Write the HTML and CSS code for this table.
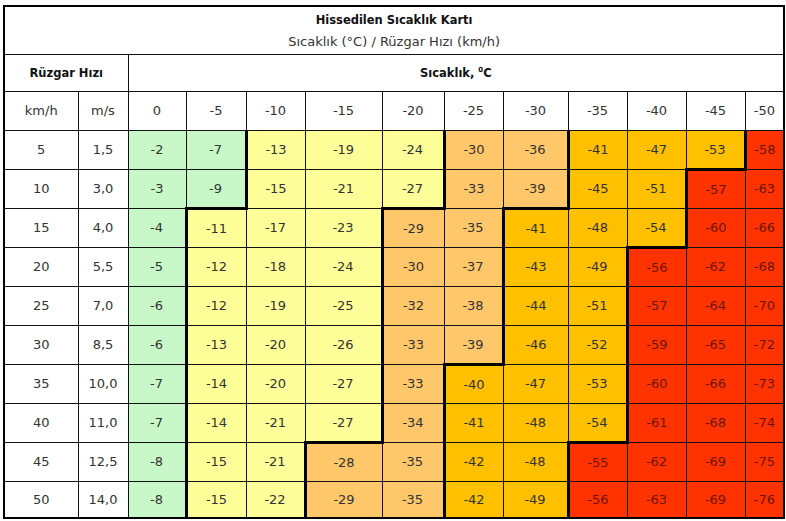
FILE: index.html
```html
<!DOCTYPE html>
<html lang="tr">
<head>
<meta charset="utf-8">
<title>Hissedilen Sıcaklık Kartı</title>
<link rel="stylesheet" href="styles.css">
</head>
<body>
<table class="chart">
  <colgroup>
    <col class="w-kmh"><col class="w-ms"><col class="w-0"><col class="w-5"><col class="w-10"><col class="w-15"><col class="w-20"><col class="w-25"><col class="w-30"><col class="w-35"><col class="w-40"><col class="w-45"><col class="w-50">
  </colgroup>
  <thead>
    <tr class="r-title">
      <th colspan="13" class="title-cell">
        <div class="title">Hissedilen Sıcaklık Kartı</div>
        <div class="subtitle">Sıcaklık (°C) / Rüzgar Hızı (km/h)</div>
      </th>
    </tr>
    <tr class="r-group">
      <th colspan="2" class="grp">Rüzgar Hızı</th>
      <th colspan="11" class="grp">Sıcaklık, <sup>0</sup>C</th>
    </tr>
    <tr class="r-head">
      <th class="h">km/h</th><th class="h">m/s</th>
      <th class="h">0</th><th class="h">-5</th><th class="h">-10</th><th class="h">-15</th><th class="h">-20</th><th class="h">-25</th><th class="h">-30</th><th class="h">-35</th><th class="h">-40</th><th class="h">-45</th><th class="h">-50</th>
    </tr>
  </thead>
  <tbody>
    <tr class="r">
      <td>5</td><td>1,5</td>
      <td class="g">-2</td><td class="g tr">-7</td><td class="y">-13</td><td class="y">-19</td><td class="y tr">-24</td><td class="lo">-30</td><td class="lo tr">-36</td><td class="o">-41</td><td class="o">-47</td><td class="o tr tb">-53</td><td class="rd">-58</td>
    </tr>
    <tr class="r">
      <td>10</td><td>3,0</td>
      <td class="g">-3</td><td class="g tr tb">-9</td><td class="y">-15</td><td class="y">-21</td><td class="y tr tb">-27</td><td class="lo">-33</td><td class="lo tr tb">-39</td><td class="o">-45</td><td class="o tr">-51</td><td class="rd">-57</td><td class="rd">-63</td>
    </tr>
    <tr class="r">
      <td>15</td><td>4,0</td>
      <td class="g tr">-4</td><td class="y">-11</td><td class="y">-17</td><td class="y tr">-23</td><td class="lo">-29</td><td class="lo tr">-35</td><td class="o">-41</td><td class="o">-48</td><td class="o tr tb">-54</td><td class="rd">-60</td><td class="rd">-66</td>
    </tr>
    <tr class="r">
      <td>20</td><td>5,5</td>
      <td class="g tr">-5</td><td class="y">-12</td><td class="y">-18</td><td class="y tr">-24</td><td class="lo">-30</td><td class="lo tr">-37</td><td class="o">-43</td><td class="o tr">-49</td><td class="rd">-56</td><td class="rd">-62</td><td class="rd">-68</td>
    </tr>
    <tr class="r">
      <td>25</td><td>7,0</td>
      <td class="g tr">-6</td><td class="y">-12</td><td class="y">-19</td><td class="y tr">-25</td><td class="lo">-32</td><td class="lo tr">-38</td><td class="o">-44</td><td class="o tr">-51</td><td class="rd">-57</td><td class="rd">-64</td><td class="rd">-70</td>
    </tr>
    <tr class="r">
      <td>30</td><td>8,5</td>
      <td class="g tr">-6</td><td class="y">-13</td><td class="y">-20</td><td class="y tr">-26</td><td class="lo">-33</td><td class="lo tr tb">-39</td><td class="o">-46</td><td class="o tr">-52</td><td class="rd">-59</td><td class="rd">-65</td><td class="rd">-72</td>
    </tr>
    <tr class="r">
      <td>35</td><td>10,0</td>
      <td class="g tr">-7</td><td class="y">-14</td><td class="y">-20</td><td class="y tr">-27</td><td class="lo tr">-33</td><td class="o">-40</td><td class="o">-47</td><td class="o tr">-53</td><td class="rd">-60</td><td class="rd">-66</td><td class="rd">-73</td>
    </tr>
    <tr class="r">
      <td>40</td><td>11,0</td>
      <td class="g tr">-7</td><td class="y">-14</td><td class="y">-21</td><td class="y tr tb">-27</td><td class="lo tr">-34</td><td class="o">-41</td><td class="o">-48</td><td class="o tr tb">-54</td><td class="rd">-61</td><td class="rd">-68</td><td class="rd">-74</td>
    </tr>
    <tr class="r">
      <td>45</td><td>12,5</td>
      <td class="g tr">-8</td><td class="y">-15</td><td class="y tr">-21</td><td class="lo">-28</td><td class="lo tr">-35</td><td class="o">-42</td><td class="o tr">-48</td><td class="rd">-55</td><td class="rd">-62</td><td class="rd">-69</td><td class="rd">-75</td>
    </tr>
    <tr class="r last">
      <td>50</td><td>14,0</td>
      <td class="g tr">-8</td><td class="y">-15</td><td class="y tr">-22</td><td class="lo">-29</td><td class="lo tr">-35</td><td class="o">-42</td><td class="o tr">-49</td><td class="rd">-56</td><td class="rd">-63</td><td class="rd">-69</td><td class="rd">-76</td>
    </tr>
  </tbody>
</table>
</body>
</html>
```
FILE: styles.css
```css
html, body {
  margin: 0;
  padding: 0;
  background: #ffffff;
}
body {
  padding: 5px 0 0 3px;
  font-family: "DejaVu Sans", "Liberation Sans", sans-serif;
  color: #333333;
}
.chart {
  border-collapse: collapse;
  table-layout: fixed;
  width: 780px;
  border: 2px solid #000;
  font-size: 13px;
}
.w-kmh { width: 74px; }
.w-ms { width: 50px; }
.w-0 { width: 58px; }
.w-5 { width: 60px; }
.w-10 { width: 59px; }
.w-15 { width: 77px; }
.w-20 { width: 62px; }
.w-25 { width: 59px; }
.w-30 { width: 65px; }
.w-35 { width: 59px; }
.w-40 { width: 59px; }
.w-45 { width: 59px; }
.w-50 { width: 39px; }

.chart th, .chart td {
  border: 1px solid #111;
  padding: 0;
  text-align: center;
  vertical-align: middle;
  font-weight: normal;
}
.r-title { height: 48px; }
.title-cell { vertical-align: top; }
.title {
  font-weight: bold;
  font-size: 11.5px;
  margin-top: 1px;
  color: #111;
}
.subtitle {
  font-size: 13px;
  margin-top: 7px;
  color: #333;
}
.r-group { height: 37px; }
.grp {
  font-weight: bold !important;
  font-size: 11.5px;
  color: #111;
}
.grp sup {
  font-size: 7px;
  vertical-align: 5px;
}
.r-head { height: 39px; }
.r { height: 39px; }
.r.last { height: 37px; }

.g { background: #c8f7c8; }
.y { background: #ffff99; }
.lo { background: #fec76a; }
.o { background: #ffc000; }
.rd { background: #ff3300; color: #6e1400; }

.chart td.tr { border-right: 3px solid #000; }
.chart td.tb { border-bottom: 3px solid #000; }
```
